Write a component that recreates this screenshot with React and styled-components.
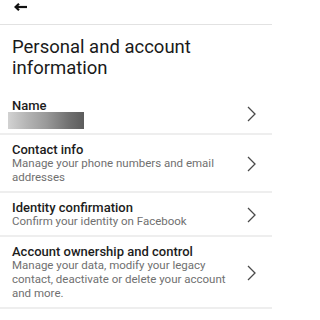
import React from "react";
import styled, { createGlobalStyle } from "styled-components";

const Global = createGlobalStyle`
  html, body { margin: 0; padding: 0; background: #ffffff; }
  body { font-family: Roboto, "Noto Sans", Arial, sans-serif; }
`;

const Page = styled.div`
  width: 272px;
  min-height: 320px;
  background: #fff;
  color: #1c1e21;
  font-family: Roboto, "Noto Sans", Arial, sans-serif;
`;

const Header = styled.div`
  height: 25px;
  display: flex;
  align-items: flex-start;
  padding: 3px 0 0 14px;
  box-sizing: border-box;
  border-bottom: 1px solid #e2e2e2;
`;

const BackButton = styled.button`
  border: 0;
  background: none;
  padding: 0;
  margin: 0;
  width: 13px;
  height: 8px;
  display: flex;
  color: #111;
`;

const Title = styled.h1`
  margin: 12px 0 12px;
  padding: 0 12px;
  font-size: 18.5px;
  line-height: 21px;
  font-weight: 400;
  color: #1a1a1a;
`;

const List = styled.div`
  display: flex;
  flex-direction: column;
`;

const Row = styled.div`
  display: flex;
  align-items: center;
  justify-content: space-between;
  padding: 8px 16px ${(p) => p.$padBottom ?? 7}px 12px;
  border-bottom: 2px solid #eeeeee;
`;

const Texts = styled.div`
  display: flex;
  flex-direction: column;
`;

const RowTitle = styled.div`
  font-size: 13px;
  line-height: 13px;
  font-weight: 500;
  color: #1c1c1c;
`;

const RowSub = styled.div`
  font-size: 11.5px;
  line-height: 14px;
  color: #707070;
  max-width: 220px;
`;

const Redacted = styled.div`
  width: 76px;
  height: 17px;
  margin-left: -4px;
  background: linear-gradient(90deg, #d2d2d2 0%, #b4b4b4 25%, #9a9a9a 50%, #707070 80%, #5c5c5c 100%);
`;

const Chevron = () => (
  <svg width="9" height="16" viewBox="0 0 9 16" fill="none">
    <path d="M1 1 L8 8 L1 15" stroke="#4a4a4a" strokeWidth="1.3" strokeLinejoin="miter" />
  </svg>
);

const BackArrow = () => (
  <svg width="13" height="8" viewBox="0 0 13 8" fill="none">
    <path d="M13 4 H2" stroke="currentColor" strokeWidth="2.2" />
    <path d="M5 0.8 L1.6 4 L5 7.2" stroke="currentColor" strokeWidth="2.2" />
  </svg>
);

const items = [
  { title: "Contact info", sub: "Manage your phone numbers and email addresses" },
  { title: "Identity confirmation", sub: "Confirm your identity on Facebook" },
  {
    title: "Account ownership and control",
    sub: "Manage your data, modify your legacy contact, deactivate or delete your account and more.",
  },
];

export default function App() {
  return (
    <Page>
      <Global />
      <Header>
        <BackButton aria-label="Back">
          <BackArrow />
        </BackButton>
      </Header>
      <Title>Personal and account information</Title>
      <List>
        <Row $padBottom={4}>
          <Texts>
            <RowTitle>Name</RowTitle>
            <Redacted />
          </Texts>
          <Chevron />
        </Row>
        {items.map((it) => (
          <Row key={it.title}>
            <Texts>
              <RowTitle>{it.title}</RowTitle>
              <RowSub>{it.sub}</RowSub>
            </Texts>
            <Chevron />
          </Row>
        ))}
      </List>
    </Page>
  );
}
